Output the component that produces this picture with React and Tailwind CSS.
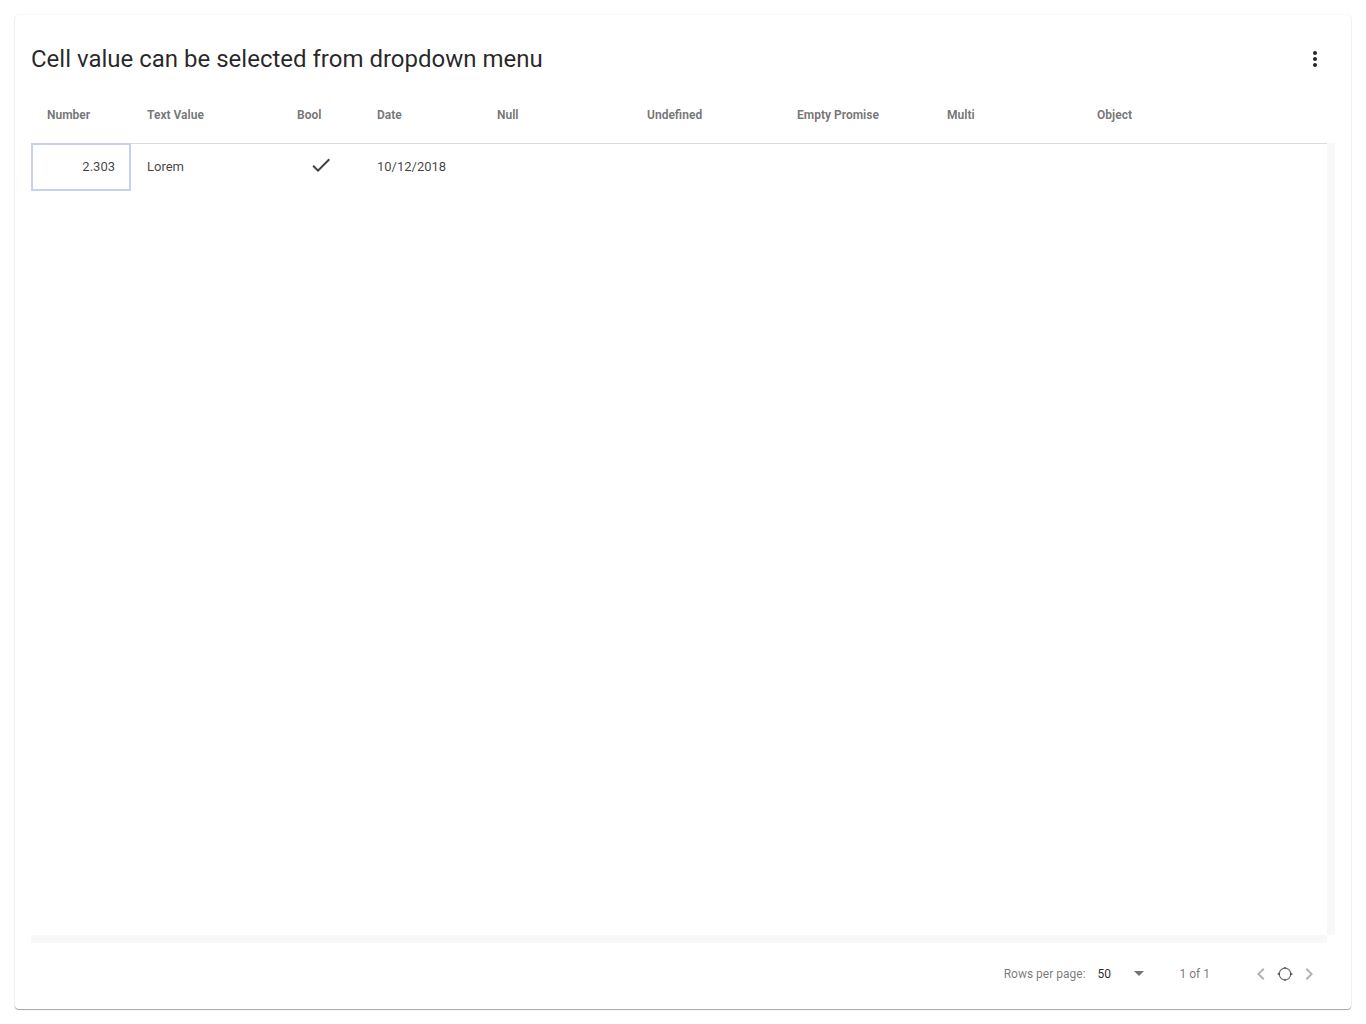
const columns = [
  { name: 'Number', width: 'w-[100px]' },
  { name: 'Text Value', width: 'w-[150px]' },
  { name: 'Bool', width: 'w-20' },
  { name: 'Date', width: 'w-[120px]' },
  { name: 'Null', width: 'w-[150px]' },
  { name: 'Undefined', width: 'w-[150px]' },
  { name: 'Empty Promise', width: 'w-[150px]' },
  { name: 'Multi', width: 'w-[150px]' },
  { name: 'Object', width: 'w-[150px]' },
];

function Icon({ d }) {
  return (
    <svg viewBox="0 0 24 24" className="size-6" fill="currentColor" aria-hidden="true">
      <path d={d} />
    </svg>
  );
}

function DataTable() {
  return (
    <table className="w-full table-fixed border-collapse text-left">
      <thead>
        <tr className="h-14 border-b border-[#dbdbdb] text-xs text-black/55">
          {columns.map((column) => (
            <th key={column.name} scope="col" className={`${column.width} px-4 font-bold`}>
              {column.name}
            </th>
          ))}
          <th aria-hidden="true" />
        </tr>
      </thead>
      <tbody>
        <tr className="h-12 text-[13px] text-black/75">
          <td className="px-4 pb-0.5 text-right outline-2 -outline-offset-2 outline-[#c9d0ec]">2.303</td>
          <td className="px-4 pb-0.5">Lorem</td>
          <td className="px-4">
            <span className="flex justify-center pb-1" role="img" aria-label="true">
              <Icon d="M9 16.17L4.83 12l-1.42 1.41L9 19 21 7l-1.41-1.41z" />
            </span>
          </td>
          <td className="px-4 pb-0.5">10/12/2018</td>
          <td /><td /><td /><td /><td /><td />
        </tr>
      </tbody>
    </table>
  );
}

function Pager() {
  return (
    <footer className="flex h-[66px] items-center justify-end pr-3.5 pb-1 text-xs text-black/55">
      <label htmlFor="page-size">Rows per page:</label>
      <div className="relative ml-3 flex items-center">
        <select id="page-size" defaultValue="50" className="w-[53px] appearance-none bg-transparent text-black/85">
          <option>10</option>
          <option>50</option>
          <option>100</option>
        </select>
        <span className="pointer-events-none absolute right-0 pb-0.5">
          <Icon d="M7 10l5 5 5-5z" />
        </span>
      </div>
      <span className="ml-[29px]">1 of 1</span>
      <div className="ml-[39px] flex items-center">
        <button type="button" disabled aria-label="Previous page" className="text-black/30">
          <Icon d="M15.41 7.41L14 6l-6 6 6 6 1.41-1.41L10.83 12z" />
        </button>
        <button type="button" aria-label="Current page">
          <svg viewBox="0 0 24 24" className="size-6" fill="none" stroke="currentColor" aria-hidden="true">
            <circle cx="12" cy="12" r="5.8" strokeWidth="1.3" />
            <path d="M4.5 12H7M17 12h2.500M12 5v1.500M12 17.500V19" strokeWidth="1.6" />
          </svg>
        </button>
        <button type="button" disabled aria-label="Next page" className="text-black/30">
          <Icon d="M10 6L8.59 7.41 13.17 12l-4.58 4.59L10 18l6-6z" />
        </button>
      </div>
    </footer>
  );
}

export default function App() {
  return (
    <div className="flex min-h-screen bg-white p-[15px] font-[Roboto,sans-serif]">
      <main className="flex min-w-0 flex-1 flex-col rounded bg-white px-4 shadow-[0_1px_1px_rgba(0,0,0,0.35),0_0_2px_rgba(0,0,0,0.1)]">
        <header className="flex h-[72px] items-center justify-between pt-4 pr-2">
          <h1 className="text-2xl text-black/85">Cell value can be selected from dropdown menu</h1>
          <button type="button" aria-label="Menu" className="text-black/85">
            <Icon d="M12 8c1.1 0 2-.9 2-2s-.9-2-2-2-2 .9-2 2 .9 2 2 2zm0 2c-1.1 0-2 .9-2 2s.9 2 2 2 2-.9 2-2-.9-2-2-2zm0 6c-1.1 0-2 .9-2 2s.9 2 2 2 2-.9 2-2-.9-2-2-2z" />
          </button>
        </header>
        <section className="grid flex-1 grid-cols-[1fr_8px] grid-rows-[56px_1fr_8px]">
          <div className="col-start-1 row-span-2 row-start-1">
            <DataTable />
          </div>
          <div className="col-start-2 row-start-2 bg-[#f8f8f8]" />
          <div className="col-start-1 row-start-3 bg-[#f8f8f8]" />
        </section>
        <Pager />
      </main>
    </div>
  );
}
